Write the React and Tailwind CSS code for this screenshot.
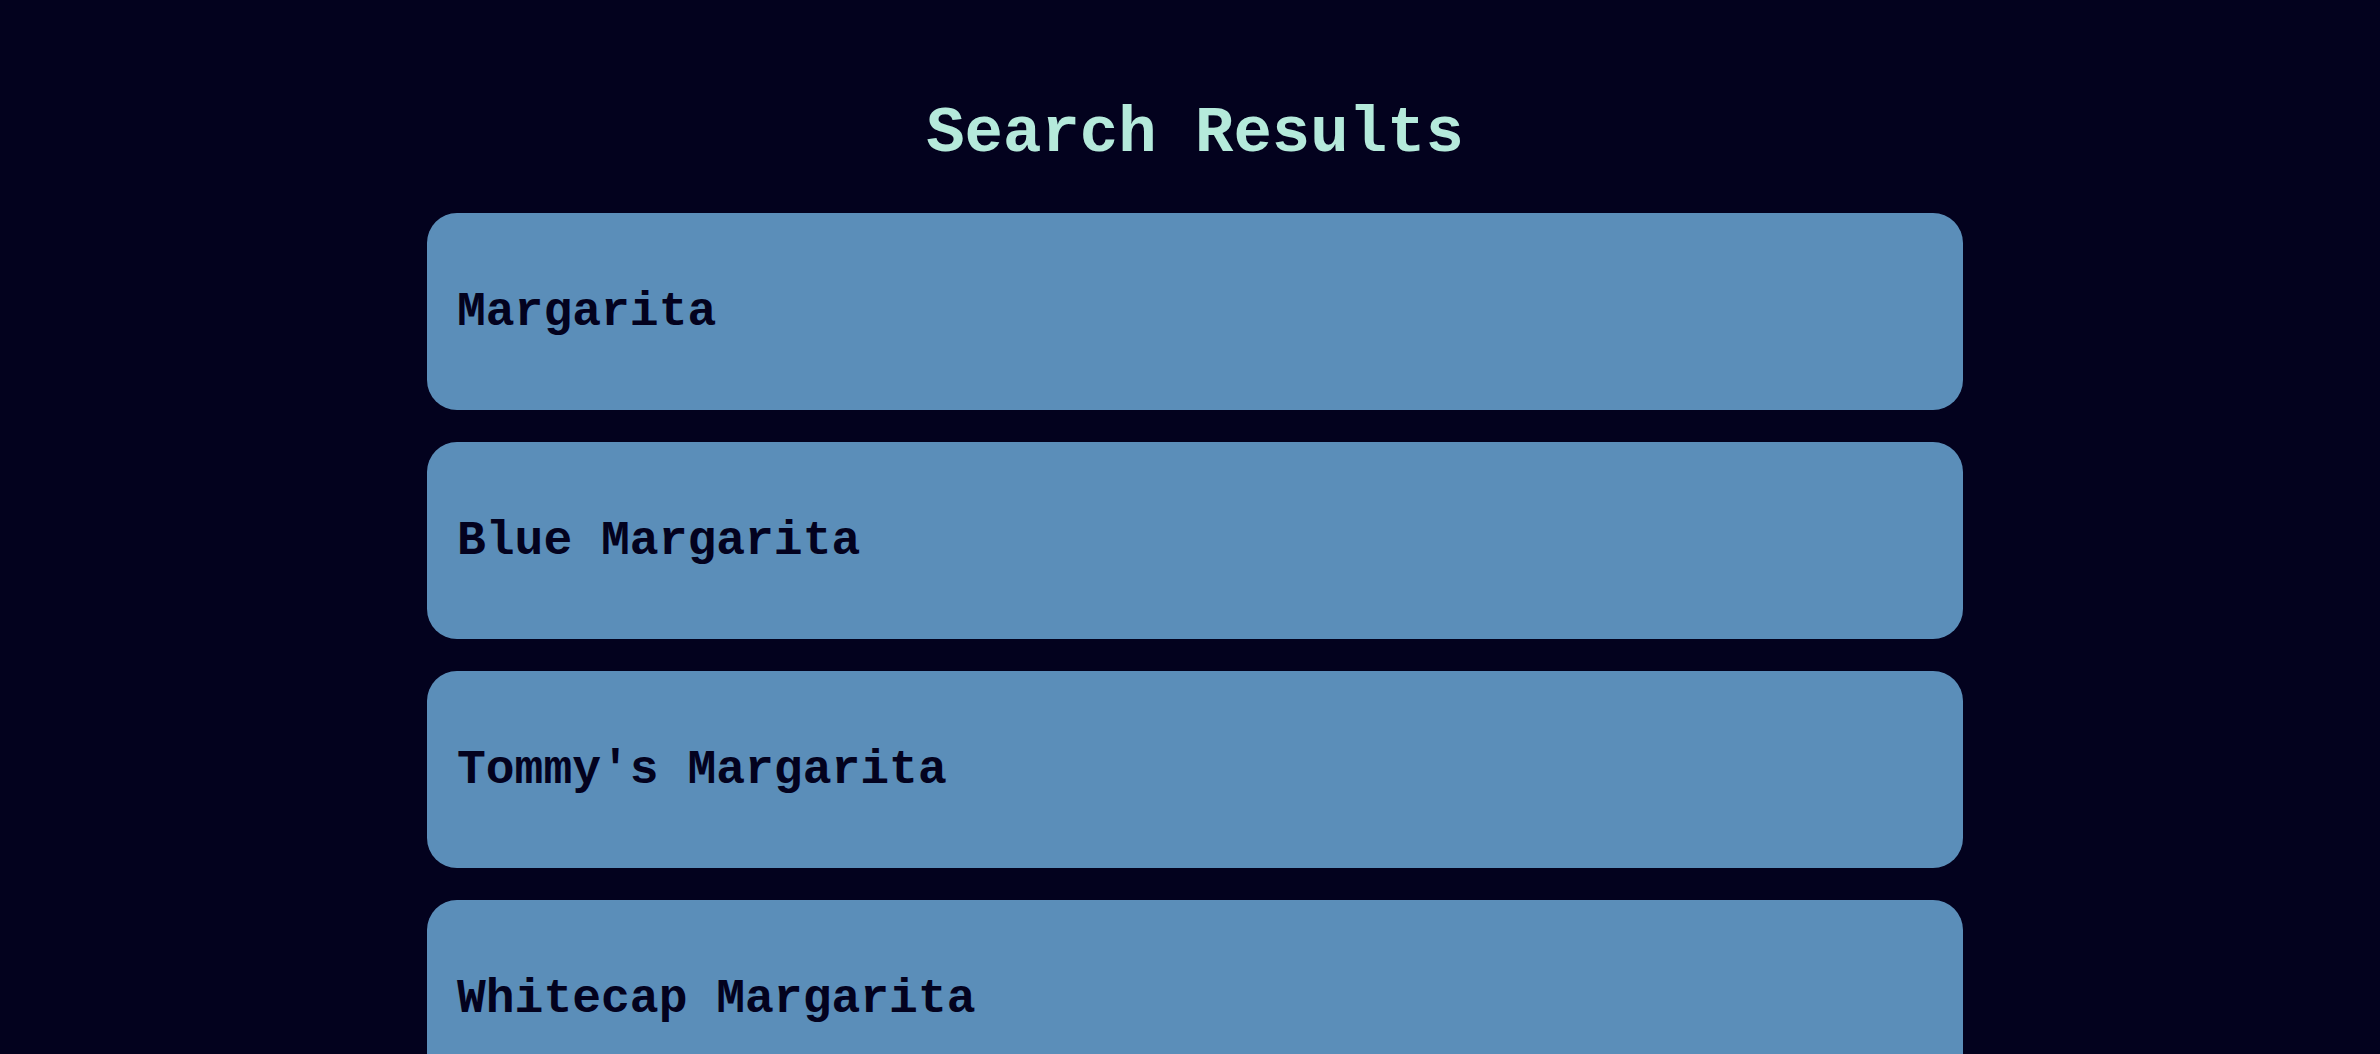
const results = ["Margarita", "Blue Margarita", "Tommy's Margarita", "Whitecap Margarita"];

const App = () => {
  return (
    <div
      className="min-h-screen bg-[#03021e] pl-[10px] pt-[98px] pb-16"
      style={{ fontFamily: '"Courier New", "Nimbus Mono PS", "Nimbus Mono L", FreeMono, Courier, "Liberation Mono", monospace' }}
    >
      <h1 className="text-center text-[64px] leading-[72px] font-bold text-[#b5eadb] mb-[43px]">
        Search Results
      </h1>
      <div className="mx-auto w-[1536px] flex flex-col gap-8">
        {results.map((name) => (
          <div
            key={name}
            className="h-[197px] flex items-center pl-[30px] rounded-[30px] bg-[#5b8eb9] cursor-pointer"
          >
            <span className="text-[48px] font-bold text-[#03021e]">{name}</span>
          </div>
        ))}
      </div>
    </div>
  );
};

export default App;
